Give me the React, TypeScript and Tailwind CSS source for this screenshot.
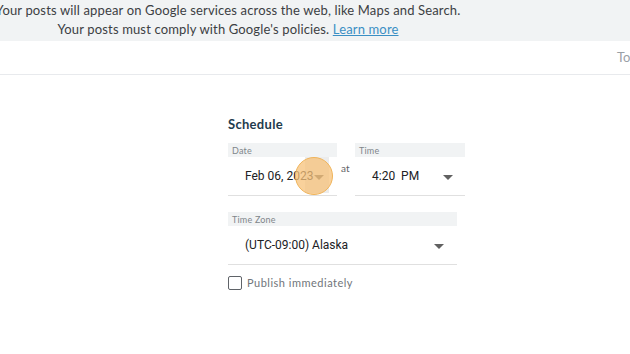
import React from "react";

const mont = { fontFamily: "Lato, 'Open Sans', sans-serif" } as const;

function Arrow({ className = "" }: { className?: string }) {
  return (
    <svg width="10" height="5" viewBox="0 0 10 5" className={className}>
      <path d="M0 0 L10 0 L5 5 Z" fill="#616161" />
    </svg>
  );
}

function Field({
  label,
  value,
  width,
  arrowRight,
  children,
}: {
  label: string;
  value: string;
  width: string;
  arrowRight: string;
  children?: React.ReactNode;
}) {
  return (
    <div className={`relative ${width} border-b border-[#e0e0e0]`}>
      <div className="h-[14px] bg-[#f1f3f4] pl-[4px] text-[9px] leading-[16px] tracking-[0.2px] text-[#80868b]" style={mont}>
        {label}
      </div>
      {children}
      <div className="relative flex h-[38px] items-center whitespace-pre pl-[17px] text-[12px] text-[#202124]" style={{ fontFamily: "Roboto, sans-serif" }}>
        {value}
      </div>
      <Arrow className={`absolute top-[32px] ${arrowRight}`} />
    </div>
  );
}

export default function App() {
  return (
    <div className="h-[354px] w-[630px] overflow-hidden bg-white" style={mont}>
      <div className="h-[41px] bg-[#f1f3f4]">
        <div className="flex w-[456px] flex-col items-center pt-[1px] text-[13px] tracking-[0.15px] text-[#3c4043]">
          <div className="h-[19px] whitespace-nowrap leading-[19px]">
            Your posts will appear on Google services across the web, like Maps and Search.
          </div>
          <div className="h-[19px] whitespace-nowrap leading-[19px]">
            Your posts must comply with Google's policies.{" "}
            <span className="text-[#3b8fc4] underline">Learn more</span>
          </div>
        </div>
      </div>
      <div className="flex h-[34px] items-center border-b border-[#e8eaed] pl-[617px] text-[13px] text-[#9aa0a6]">
        <span className="whitespace-nowrap">To</span>
      </div>
      <div className="pl-[228px] pt-[40px]">
        <div className="text-[13px] font-bold tracking-[0.3px] text-[#1f3b4d]">Schedule</div>
        <div className="mt-[8px] flex">
          <Field label="Date" value="Feb 06, 2023" width="w-[109px]" arrowRight="right-[13px]">
            <div className="absolute left-[77px] top-[14px] h-[36px] w-[24px] bg-[#ececec]" />
          </Field>
          <div className="w-[18px] pl-[4px] pt-[18px] text-[10px] text-[#5f6368]">at</div>
          <Field label="Time" value="4:20  PM" width="w-[110px]" arrowRight="right-[12px]" />
        </div>
        <div className="mt-[16px]">
          <Field label="Time Zone" value="(UTC-09:00) Alaska" width="w-[229px]" arrowRight="right-[13px]" />
        </div>
        <label className="mt-[10px] flex items-center gap-[5px]">
          <span className="h-[14px] w-[14px] rounded-[2px] border-[1.5px] border-[#5f6368]" />
          <span className="text-[11px] tracking-[0.5px] text-[#70757a]">Publish immediately</span>
        </label>
      </div>
      <div className="pointer-events-none absolute left-[295px] top-[157px] h-[38px] w-[38px] rounded-full border border-[#f0b45a] bg-[#f7c27a]/75" />
    </div>
  );
}
